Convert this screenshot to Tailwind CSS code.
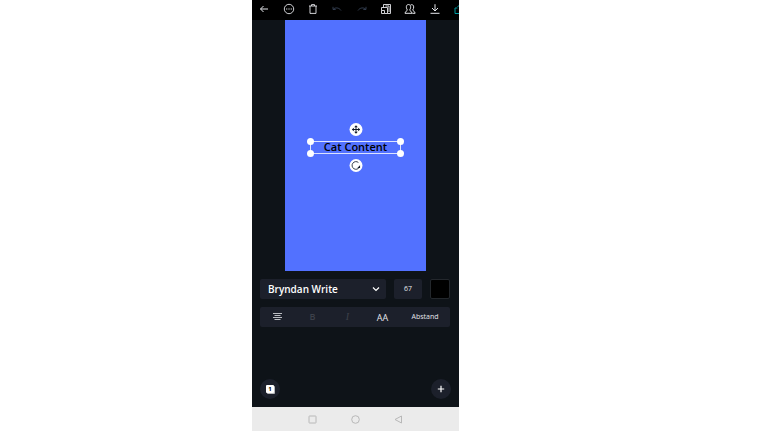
<!DOCTYPE html>
<html lang="de">

<head>
  <meta charset="UTF-8">
  <meta name="viewport" content="width=device-width, initial-scale=1.0">
  <title>Cat Content</title>
  <script src="https://cdn.jsdelivr.net/npm/@tailwindcss/browser@4"></script>
</head>

<body class="bg-white font-['Open_Sans',sans-serif]">
  <div class="grid grid-cols-[252fr_207fr_309fr] min-h-screen pb-px">
    <main class="col-start-2 min-w-0 flex flex-col bg-[#0e1318] text-white">

      <!-- Toolbar -->
      <header class="flex h-5 pb-0.5 bg-black text-gray-200">
        <div class="grid grid-cols-8 flex-1">
          <button aria-label="Zurück" class="flex items-center justify-center">
            <svg class="size-3" viewBox="0 0 12 12" fill="none" stroke="currentColor"><path d="M10 6H2.5M5.5 3l-3 3 3 3" /></svg>
          </button>
          <button aria-label="Mehr" class="flex items-center justify-center">
            <svg class="size-3" viewBox="0 0 12 12" fill="none" stroke="currentColor"><circle cx="6" cy="6" r="4.7" stroke-width=".9" /><path d="M3.1 6h1.2M5.4 6h1.2M7.7 6h1.2" stroke-width="1.2" /></svg>
          </button>
          <button aria-label="Löschen" class="flex items-center justify-center">
            <svg class="size-3" viewBox="0 0 12 12" fill="none" stroke="currentColor" stroke-width=".9"><path d="M2 3h8M4.5 3V1.6h3V3M3 3v7.4h6V3" /></svg>
          </button>
          <button aria-label="Rückgängig" disabled class="flex items-center justify-center text-gray-700">
            <svg class="size-3" viewBox="0 0 12 12" fill="none" stroke="currentColor" stroke-width=".9"><path d="M2 3.8v2.7h2.7M2.2 6.3C4 4.3 8 4.3 10 7.5" /></svg>
          </button>
          <button aria-label="Wiederholen" disabled class="flex items-center justify-center text-gray-700">
            <svg class="size-3" viewBox="0 0 12 12" fill="none" stroke="currentColor" stroke-width=".9"><path d="M10 3.8v2.7H7.3M9.8 6.3C8 4.3 4 4.3 2 7.5" /></svg>
          </button>
          <button aria-label="Größe ändern" class="flex items-center justify-center">
            <svg class="size-3" viewBox="0 0 12 12" fill="none" stroke="currentColor" stroke-width=".9"><path d="M3.5 4.5V1.5h7v9H7.5M1.5 7.5h3v3h-3zM1.5 7.5v-3h6v6h-3M5.5 3h3.5v6" /></svg>
          </button>
          <button aria-label="Teilen" class="flex items-center justify-center">
            <svg class="size-3" viewBox="0 0 12 12" fill="none" stroke="currentColor"><path d="M3.4 7C1.6 4.6 2.2 1.5 4.5 1.5S7.4 4.6 5.6 7c.2 1 2.2 1.2 2.4 3.3H1C1.2 8.2 3.2 8 3.4 7zM6.5 2c2.7-1.4 4.4 1.7 2.2 5 .3 1 2.2 1.2 2.4 3.3H8.3" /></svg>
          </button>
          <button aria-label="Herunterladen" class="flex items-center justify-center">
            <svg class="size-3" viewBox="0 0 12 12" fill="none" stroke="currentColor"><path d="M6 1.2v6.6M3 5l3 3 3-3M1.5 10.3h9" /></svg>
          </button>
        </div>
        <button aria-label="Veröffentlichen" class="w-3 flex items-center pl-[7px] overflow-hidden text-[#009a9f]">
          <svg class="size-3 shrink-0" viewBox="0 0 12 12" fill="none" stroke="currentColor"><path d="M3.5 5H1v5.5h10V5H8.5M6 8V1.5M3.5 4 6 1.5 8.5 4" /></svg>
        </button>
      </header>

      <!-- Canvas -->
      <section class="px-[33px]">
        <div class="aspect-9/16 pt-1 bg-[#5271ff] flex items-center justify-center">
          <div class="relative w-[91px] h-[13px] border border-white/80 flex items-center justify-center">
            <p class="text-[11px] leading-3 font-semibold text-black whitespace-nowrap">Cat Content</p>
            <span class="absolute -left-1 -top-1 size-[7px] rounded-full bg-white"></span>
            <span class="absolute -right-1 -top-1 size-[7px] rounded-full bg-white"></span>
            <span class="absolute -left-1 -bottom-1 size-[7px] rounded-full bg-white"></span>
            <span class="absolute -right-1 -bottom-1 size-[7px] rounded-full bg-white"></span>
            <button aria-label="Verschieben" class="absolute left-1/2 -translate-x-1/2 bottom-[17px] size-[13px] rounded-full bg-white text-gray-900 flex items-center justify-center">
              <svg class="size-[9px]" viewBox="0 0 10 10" fill="currentColor"><path d="M5 .3 7 2.6H5.5v1.9h1.9V3L9.7 5 7.4 7V5.5H5.5v1.9H7L5 9.7 3 7.4h1.5V5.5H2.6V7L.3 5l2.3-2v1.5h1.9V2.6H3z" /></svg>
            </button>
            <button aria-label="Drehen" class="absolute left-1/2 -translate-x-1/2 top-[17px] size-[13px] rounded-full bg-white text-gray-900 flex items-center justify-center">
              <svg class="size-[11px]" viewBox="0 0 12 12" fill="none" stroke="currentColor" stroke-width=".9"><path d="M8.6 2.7A4.2 4.2 0 1 0 9.6 8" /><path d="M10.4 5.8v2.9H7.5z" fill="currentColor" stroke="none" /></svg>
            </button>
          </div>
        </div>
      </section>

      <!-- Text options -->
      <section class="pl-2 pr-[9px] pt-2 flex flex-col gap-2">
        <div class="flex gap-2 h-5">
          <div class="relative flex-1 min-w-0">
            <select aria-label="Schriftart" class="block appearance-none w-full h-5 pl-2 rounded-xs bg-[#1c202b] text-[10px] leading-4 font-semibold">
              <option>Bryndan Write</option>
            </select>
            <svg class="absolute right-1.5 top-1.5 size-2 pointer-events-none" viewBox="0 0 8 8" fill="none" stroke="currentColor" stroke-width="1.2"><path d="m1 2.5 3 3 3-3" /></svg>
          </div>
          <input type="text" aria-label="Schriftgröße" value="67" class="w-7 pt-0.5 rounded-xs bg-[#1c202b] text-center text-[7px] text-gray-200">
          <button aria-label="Textfarbe" class="w-5 rounded-xs bg-black border border-[#23272c]"></button>
        </div>

        <div class="flex h-5 rounded-xs bg-[#1c202b] text-[7px] text-gray-200">
          <button aria-label="Ausrichtung" class="w-[35px] flex items-center justify-center">
            <svg class="size-[9px]" viewBox="0 0 9 9" fill="none" stroke="currentColor" stroke-width=".8"><path d="M0 1.5h9M1.5 3.5h6M0 5.5h9M1.5 7.5h6" /></svg>
          </button>
          <button disabled class="w-[35px] text-[9px] font-semibold text-[#3d414a]">B</button>
          <button disabled class="w-[35px] text-[10px] italic font-['Liberation_Serif',serif] text-[#3d414a]">I</button>
          <button class="w-[35px] pt-0.5 text-[9px]">AA</button>
          <button class="flex-1 pt-0.5">Abstand</button>
        </div>
      </section>

      <!-- Pages and add button -->
      <div class="mt-auto pl-2 pr-2 pb-2 flex justify-between">
        <button aria-label="Seiten" class="size-5 rounded-full bg-[#1c202b] flex items-center justify-center">
          <span class="size-2 rounded-[1px] bg-white text-black text-[6px] leading-2 font-bold shadow-[1px_1px_0_#b5b7bb]">1</span>
        </button>
        <button aria-label="Hinzufügen" class="size-5 rounded-full bg-[#1c202b] flex items-center justify-center">
          <svg class="size-2" viewBox="0 0 8 8" fill="none" stroke="currentColor" stroke-width="1.2"><path d="M4 .8v6.4M.8 4h6.4" /></svg>
        </button>
      </div>

      <!-- System navigation -->
      <nav class="h-6 bg-[#ebebeb] text-[#b8b8b8] flex items-center justify-center gap-[34px]">
        <button aria-label="Übersicht">
          <svg class="size-[9px] block" viewBox="0 0 9 9" fill="none" stroke="currentColor"><rect x="1" y="1" width="7" height="7" rx=".5" /></svg>
        </button>
        <button aria-label="Startseite">
          <svg class="size-[9px] block" viewBox="0 0 9 9" fill="none" stroke="currentColor"><circle cx="4.5" cy="4.5" r="3.8" /></svg>
        </button>
        <button aria-label="Zurück">
          <svg class="size-[9px] block" viewBox="0 0 9 9" fill="none" stroke="currentColor"><path d="M7.5 1v7L1 4.5z" /></svg>
        </button>
      </nav>
    </main>
  </div>
</body>

</html>
